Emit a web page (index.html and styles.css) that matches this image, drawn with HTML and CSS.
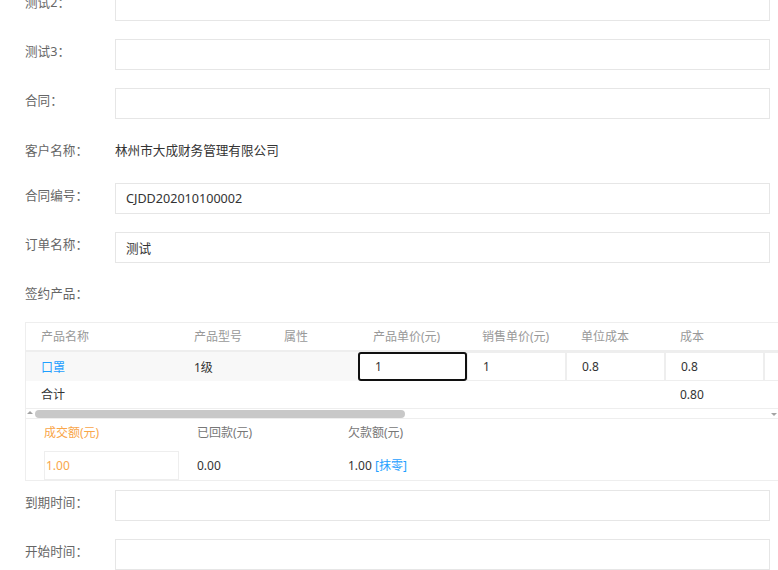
FILE: index.html
```html
<!DOCTYPE html>
<html lang="zh-CN">
<head>
    <meta charset="UTF-8">
    <meta name="viewport" content="width=device-width, initial-scale=1.0">
    <title>订单编辑</title>
    <link rel="stylesheet" href="styles.css">
</head>
<body>
    <form class="page" id="orderForm">
        <div class="form-item">
            <label class="form-label" for="test2">测试2：</label>
            <input class="form-input" type="text" id="test2" name="test2">
        </div>

        <div class="form-item">
            <label class="form-label" for="test3">测试3：</label>
            <input class="form-input" type="text" id="test3" name="test3">
        </div>

        <div class="form-item">
            <label class="form-label" for="contract">合同：</label>
            <input class="form-input" type="text" id="contract" name="contract">
        </div>

        <div class="form-item text-item">
            <label class="form-label">客户名称：</label>
            <div class="form-text">林州市大成财务管理有限公司</div>
        </div>

        <div class="form-item">
            <label class="form-label" for="contractNo">合同编号：</label>
            <input class="form-input" type="text" id="contractNo" name="contractNo" value="CJDD202010100002">
        </div>

        <div class="form-item">
            <label class="form-label" for="orderName">订单名称：</label>
            <input class="form-input" type="text" id="orderName" name="orderName" value="测试">
        </div>

        <div class="form-item label-only">
            <label class="form-label">签约产品：</label>
        </div>

        <div class="product-box">
            <div class="table-wrap">
                <table class="product-table">
                    <colgroup>
                        <col class="col-name">
                        <col class="col-model">
                        <col class="col-attr">
                        <col class="col-price">
                        <col class="col-num">
                        <col class="col-num">
                        <col class="col-num">
                        <col class="col-num">
                    </colgroup>
                    <thead>
                        <tr>
                            <th>产品名称</th>
                            <th class="pad16">产品型号</th>
                            <th class="pad16">属性</th>
                            <th>产品单价(元)</th>
                            <th>销售单价(元)</th>
                            <th>单位成本</th>
                            <th>成本</th>
                            <th></th>
                        </tr>
                    </thead>
                    <tbody>
                        <tr class="item-row">
                            <td class="text-cell"><a class="link" href="#">口罩</a></td>
                            <td class="text-cell pad16">1级</td>
                            <td class="text-cell pad16"></td>
                            <td><input class="cell-input is-focus" type="text" value="1"></td>
                            <td><input class="cell-input" type="text" value="1"></td>
                            <td><input class="cell-input" type="text" value="0.8"></td>
                            <td><input class="cell-input" type="text" value="0.8"></td>
                            <td><input class="cell-input" type="text" value=""></td>
                        </tr>
                        <tr class="sum-row">
                            <td>合计</td>
                            <td></td>
                            <td></td>
                            <td></td>
                            <td></td>
                            <td></td>
                            <td>0.80</td>
                            <td></td>
                        </tr>
                    </tbody>
                </table>
            </div>

            <div class="hscroll">
                <span class="arrow-up"></span>
                <span class="scroll-thumb"></span>
                <span class="scroll-space"></span>
                <span class="arrow-down"></span>
            </div>

            <div class="deal-summary">
                <div class="deal-label is-orange">成交额(元)</div>
                <div class="deal-label">已回款(元)</div>
                <div class="deal-label">欠款额(元)</div>
                <div><input class="deal-input" type="text" value="1.00"></div>
                <div class="deal-value">0.00</div>
                <div class="deal-value">1.00 <a class="link" href="#">[抹零]</a></div>
            </div>
        </div>

        <div class="form-item">
            <label class="form-label" for="endTime">到期时间：</label>
            <input class="form-input" type="text" id="endTime" name="endTime">
        </div>

        <div class="form-item">
            <label class="form-label" for="startTime">开始时间：</label>
            <input class="form-input" type="text" id="startTime" name="startTime">
        </div>
    </form>
</body>
</html>
```

FILE: styles.css
```css
html, body {
    margin: 0;
    overflow: hidden;
    background: #fff;
}
body {
    font-family: "Noto Sans", "Noto Sans CJK SC", sans-serif;
    font-size: 12.6px;
    color: #333;
}
.page {
    display: block;
    margin-top: -10px;
    padding: 0 8px 0 25px;
}
.form-item {
    display: flex;
    align-items: flex-start;
    margin-bottom: 18px;
}
.form-label {
    flex: none;
    width: 90px;
    line-height: 26px;
    color: #666;
}
.form-input {
    flex: 1;
    min-width: 0;
    height: 31px;
    box-sizing: border-box;
    border: 1px solid #e6e6e6;
    padding: 0 10px;
    font: inherit;
    color: #333;
    outline: none;
    background: #fff;
}
.text-item .form-label,
.form-text {
    line-height: 28px;
}
.label-only {
    margin-bottom: 15px;
}

/* product table */
.product-box {
    border: 1px solid #eee;
    margin-right: -9px;
    margin-bottom: 9px;
    overflow: hidden;
    font-size: 12px;
}
.table-wrap {
    overflow: hidden;
}
.product-table {
    table-layout: fixed;
    border-collapse: separate;
    border-spacing: 0;
    width: 837px;
}
.col-name { width: 152px; }
.col-model { width: 90px; }
.col-attr { width: 90px; }
.col-price { width: 109px; }
.col-num { width: 99px; }
.product-table th {
    font-weight: normal;
    text-align: left;
    color: #999;
    line-height: 27px;
    padding: 0 0 0 15px;
    border-bottom: 2px solid #eee;
    white-space: nowrap;
}
.product-table td {
    padding: 0;
    white-space: nowrap;
}
.product-table .pad16 {
    padding-left: 16px;
}
.item-row td {
    background: #f8f8f8;
    height: 29px;
}
.item-row .text-cell {
    padding-left: 15px;
}
.item-row .text-cell.pad16 {
    padding-left: 16px;
}
.cell-input {
    display: block;
    width: 100%;
    height: 29px;
    box-sizing: border-box;
    border: 1px solid #eee;
    background: #fff;
    padding: 0 0 0 15px;
    font: inherit;
    color: #333;
    outline: none;
}
.cell-input.is-focus {
    border: 2px solid #101010;
    border-radius: 3px;
}
.sum-row td {
    line-height: 27px;
    padding-left: 15px;
    border-bottom: 1px solid #eee;
}
.link {
    color: #1e9fff;
    text-decoration: none;
}

/* horizontal scrollbar */
.hscroll {
    display: flex;
    align-items: center;
    height: 9px;
    padding: 0 1px 0 1px;
    border-bottom: 1px solid #eee;
}
.arrow-up {
    width: 0;
    height: 0;
    border-left: 3px solid transparent;
    border-right: 3px solid transparent;
    border-bottom: 3px solid #a3a3a3;
    margin-top: -2px;
}
.scroll-thumb {
    width: 370px;
    height: 8px;
    margin-left: 2px;
    border-radius: 4px;
    background: #c8c8c8;
}
.scroll-space {
    flex: 1;
}
.arrow-down {
    width: 0;
    height: 0;
    border-left: 3px solid transparent;
    border-right: 3px solid transparent;
    border-top: 3px solid #a3a3a3;
    margin-top: 2px;
}

/* amount summary */
.deal-summary {
    display: grid;
    grid-template-columns: 153px 151px 1fr;
    row-gap: 8px;
    padding: 4px 0 0 18px;
}
.deal-label {
    line-height: 20px;
    color: #777;
}
.deal-label.is-orange {
    color: #f9a64a;
}
.deal-input {
    display: block;
    width: 135px;
    height: 29px;
    box-sizing: border-box;
    border: 1px solid #eee;
    padding: 0 1px;
    font: inherit;
    color: #f9a64a;
    outline: none;
}
.deal-value {
    line-height: 29px;
    color: #333;
}
```
